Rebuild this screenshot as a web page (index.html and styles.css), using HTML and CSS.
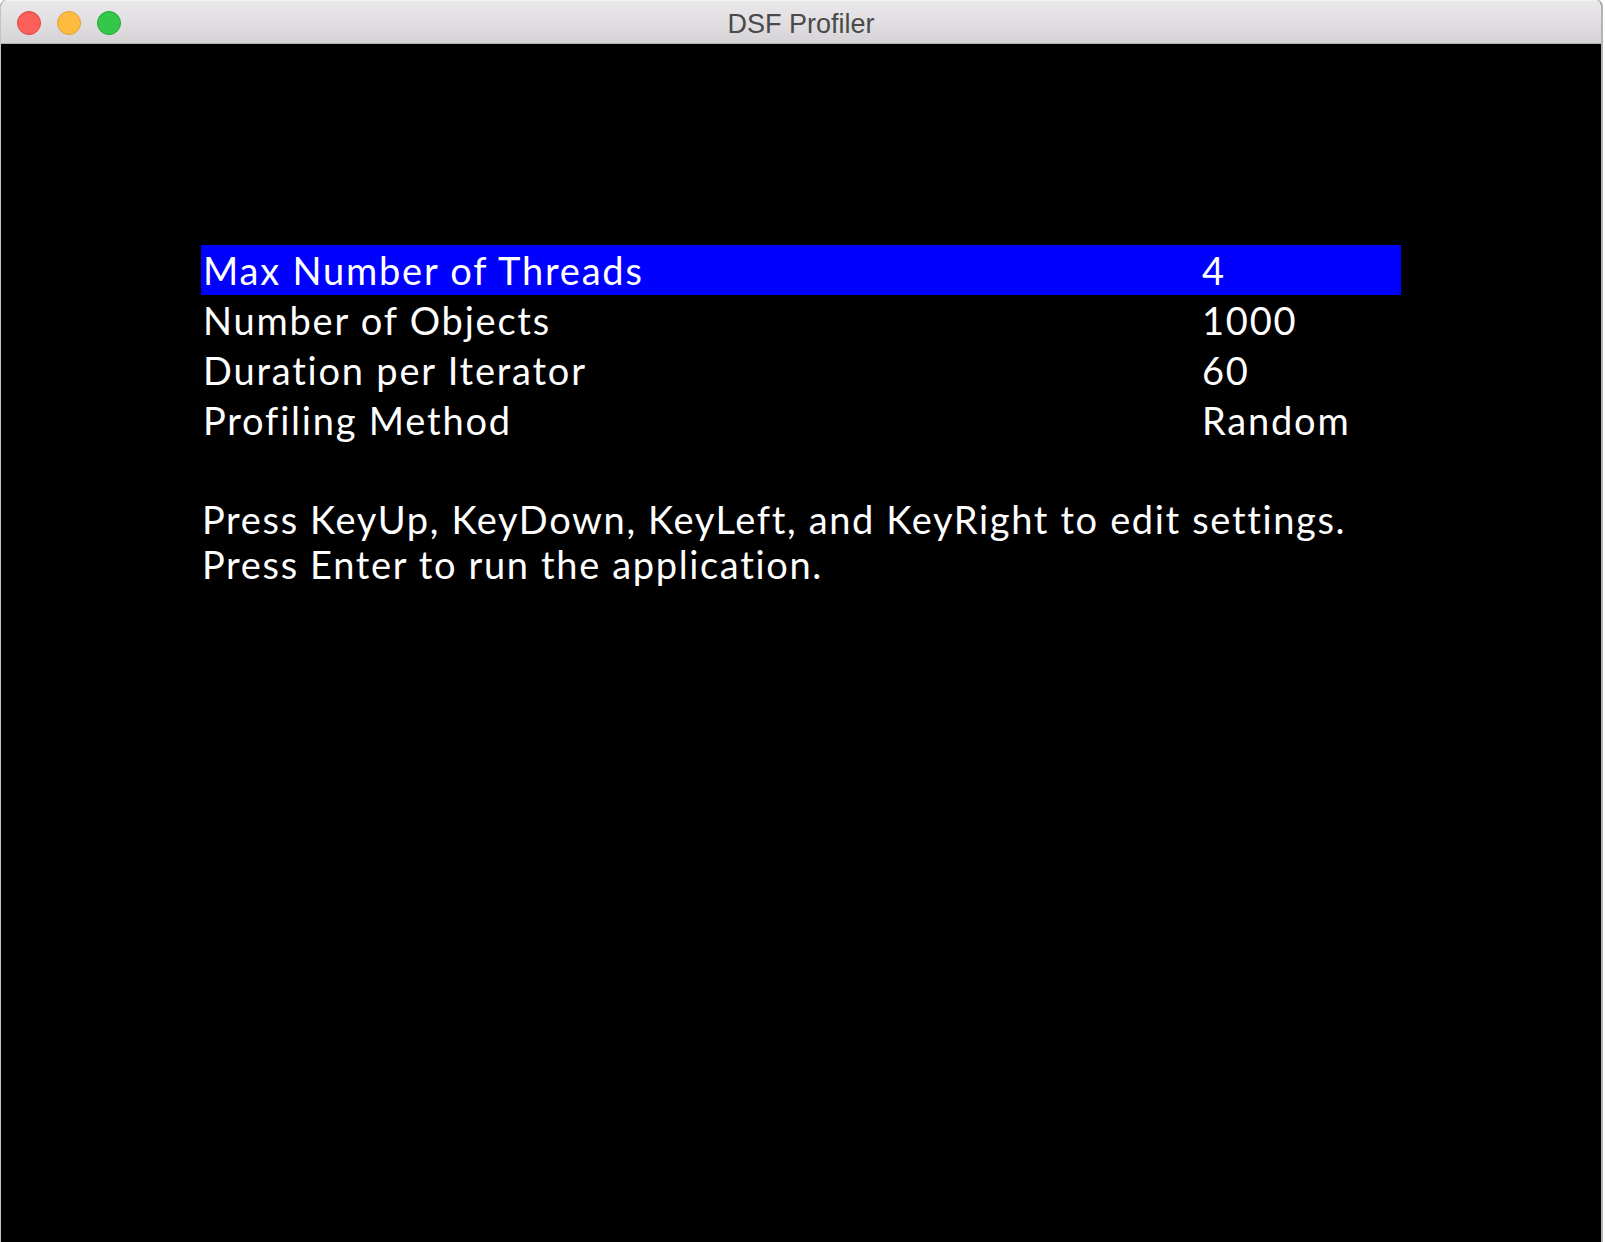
FILE: index.html
```html
<!DOCTYPE html>
<html lang="en">
<head>
<meta charset="utf-8">
<title>DSF Profiler</title>
<link rel="stylesheet" href="styles.css">
</head>
<body>
<div class="window">
  <header class="titlebar">
    <div class="lights">
      <span class="light red"></span>
      <span class="light yellow"></span>
      <span class="light green"></span>
    </div>
    <div class="title">DSF Profiler</div>
  </header>
  <main class="content">
    <div class="settings">
      <div class="row selected"><span class="label">Max Number of Threads</span><span class="value">4</span></div>
      <div class="row"><span class="label">Number of Objects</span><span class="value">1000</span></div>
      <div class="row"><span class="label">Duration per Iterator</span><span class="value">60</span></div>
      <div class="row"><span class="label">Profiling Method</span><span class="value">Random</span></div>
    </div>
    <div class="help">
      <p>Press KeyUp, KeyDown, KeyLeft, and KeyRight to edit settings.</p>
      <p>Press Enter to run the application.</p>
    </div>
  </main>
</div>
</body>
</html>
```
FILE: styles.css
```css
html, body {
  margin: 0;
  padding: 0;
  background: #ffffff;
}
body {
  width: 1605px;
  height: 1242px;
  overflow: hidden;
}
.window {
  width: 1603px;
  height: 1242px;
  display: flex;
  flex-direction: column;
  box-sizing: border-box;
  border-left: 1px solid #c4c4c4;
  border-right: 2px solid #b4b4b4;
  border-radius: 6px 6px 0 0;
  overflow: hidden;
  background: #000;
}
.titlebar {
  position: relative;
  height: 44px;
  flex: 0 0 44px;
  background: linear-gradient(to bottom, #ebe8eb 0%, #e2dfe2 50%, #d6d3d6 100%);
  border-top: 1px solid #f4f4f4;
  border-bottom: 1px solid #b3b1b3;
  box-sizing: border-box;
  display: flex;
  align-items: center;
  justify-content: center;
  padding-top: 4px;
}
.lights {
  position: absolute;
  left: 16px;
  top: 10px;
  display: flex;
  gap: 16px;
}
.light {
  width: 24px;
  height: 24px;
  border-radius: 50%;
  box-sizing: border-box;
}
.red { background: #fc605b; border: 1px solid #e0443e; }
.yellow { background: #fdbc40; border: 1px solid #dea236; }
.green { background: #34c84a; border: 1px solid #1aab29; }
.title {
  font-family: "Liberation Sans", Arial, sans-serif;
  font-size: 27px;
  color: #4a4a4a;
  line-height: 1;
}
.content {
  flex: 1;
  background: #000;
  padding: 201px 0 0 200px;
  font-family: Lato, "Open Sans", sans-serif;
  color: #ffffff;
  font-size: 38px;
  letter-spacing: 1.8px;
}
.settings {
  width: 1200px;
  display: flex;
  flex-direction: column;
}
.row {
  height: 50px;
  display: grid;
  grid-template-columns: 999px 1fr;
  padding-left: 2px;
  line-height: 50px;
}
.row.selected {
  background: #0000ff;
}
.help {
  margin-top: 52px;
  padding-left: 1px;
  letter-spacing: 1.65px;
}
.help p {
  margin: 0;
  line-height: 45px;
}
```
